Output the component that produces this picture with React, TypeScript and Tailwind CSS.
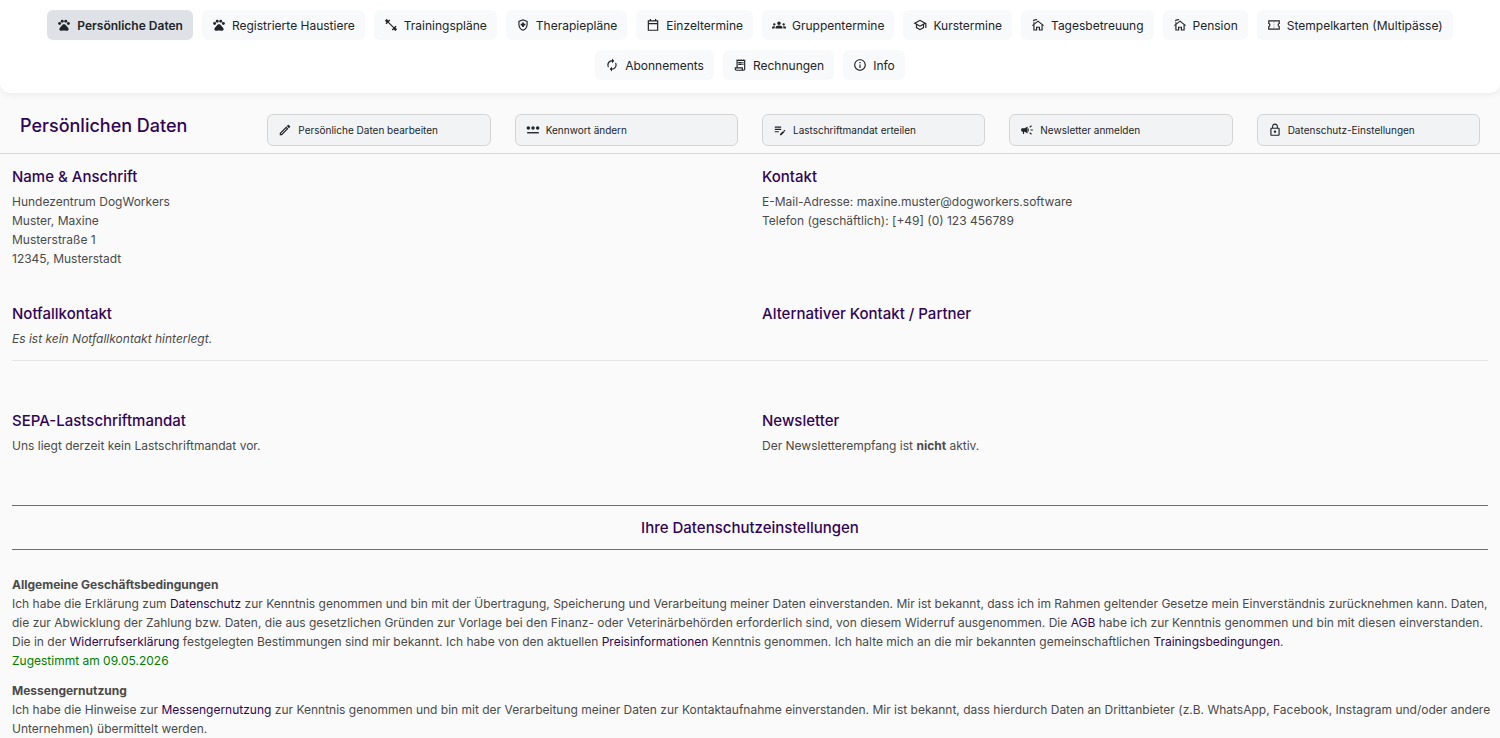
import React from "react";
import type { IconType } from "react-icons";
import {
  MdAutorenew,
  MdCampaign,
  MdEditNote,
  MdGroups,
  MdInfoOutline,
  MdLockOutline,
  MdOutlineEdit,
  MdOutlineHealthAndSafety,
  MdOutlineReceiptLong,
  MdOutlineSchool,
  MdPets,
} from "react-icons/md";

type IconComponent = IconType | React.FC<{ className?: string }>;

interface Entry {
  label: string;
  icon: IconComponent;
}

const ExerciseIcon: React.FC<{ className?: string }> = ({ className }) => (
  <svg viewBox="0 0 24 24" fill="none" stroke="currentColor" className={className}>
    <path d="M7 7 17 17" strokeWidth="2" />
    <path d="M3.4 9.8 9.8 3.4M14.2 20.6 20.6 14.2" strokeWidth="2.4" />
    <path d="M2.4 5.2 5.2 2.4M18.8 21.6 21.6 18.8" strokeWidth="2" />
    <path d="M4 4 7 7M17 17 20 20" strokeWidth="4" />
  </svg>
);

const CalendarIcon: React.FC<{ className?: string }> = ({ className }) => (
  <svg viewBox="0 0 24 24" fill="none" stroke="currentColor" strokeWidth="2" className={className}>
    <path d="M4 5h16v16H4zM4 9.5h16M7.5 1.8V5M16.5 1.8V5" />
  </svg>
);

const CottageIcon: React.FC<{ className?: string }> = ({ className }) => (
  <svg viewBox="0 0 24 24" fill="none" stroke="currentColor" strokeWidth="2" className={className}>
    <path d="M2.4 13 12 5.4 21.6 13" />
    <path d="M5 11.5V20.5h4.6v-4.6h4.8v4.6H19V11.5" />
    <path d="M5 10V7.4M4.2 5.6c0-1.8 1.2-2.4 2.8-2.4S9.6 2.8 9.6 1.6" />
  </svg>
);

const TicketIcon: React.FC<{ className?: string }> = ({ className }) => (
  <svg viewBox="0 0 24 24" fill="none" stroke="currentColor" className={className}>
    <path
      d="M3 5h18v4.2a3 3 0 0 0 0 5.6v4.2h-18v-4.2a3 3 0 0 0 0-5.6z"
      strokeWidth="2"
    />
    <path d="M12 6.5v11" strokeWidth="1.4" strokeDasharray="2.4 1.8" strokeOpacity="0.5" />
  </svg>
);

const PasswordIcon: React.FC<{ className?: string }> = ({ className }) => (
  <svg viewBox="0 0 24 24" fill="currentColor" className={className}>
    <circle cx="4" cy="8.5" r="3" />
    <circle cx="12" cy="8.5" r="3" />
    <circle cx="20" cy="8.5" r="3" />
    <path d="M2 15.5h20v2.4H2z" />
  </svg>
);

const tabs: Entry[] = [
  { label: "Persönliche Daten", icon: MdPets },
  { label: "Registrierte Haustiere", icon: MdPets },
  { label: "Trainingspläne", icon: ExerciseIcon },
  { label: "Therapiepläne", icon: MdOutlineHealthAndSafety },
  { label: "Einzeltermine", icon: CalendarIcon },
  { label: "Gruppentermine", icon: MdGroups },
  { label: "Kurstermine", icon: MdOutlineSchool },
  { label: "Tagesbetreuung", icon: CottageIcon },
  { label: "Pension", icon: CottageIcon },
  { label: "Stempelkarten (Multipässe)", icon: TicketIcon },
  { label: "Abonnements", icon: MdAutorenew },
  { label: "Rechnungen", icon: MdOutlineReceiptLong },
  { label: "Info", icon: MdInfoOutline },
];

const actions: Entry[] = [
  { label: "Persönliche Daten bearbeiten", icon: MdOutlineEdit },
  { label: "Kennwort ändern", icon: PasswordIcon },
  { label: "Lastschriftmandat erteilen", icon: MdEditNote },
  { label: "Newsletter anmelden", icon: MdCampaign },
  { label: "Datenschutz-Einstellungen", icon: MdLockOutline },
];

const Section: React.FC<{ title: string; children?: React.ReactNode }> = ({ title, children }) => (
  <section>
    <h2 className="mb-[5px] text-[15px] leading-5 font-medium text-[#310458]">{title}</h2>
    {children}
  </section>
);

const TextLink: React.FC<{ children: React.ReactNode }> = ({ children }) => (
  <a href="#" className="text-[#310458]">
    {children}
  </a>
);

export default function App() {
  return (
    <div className="min-h-screen bg-[#fafafa] font-['Inter',sans-serif] text-xs leading-[19px] text-[#4a4a4a]">
      <nav className="flex flex-wrap justify-center gap-x-[9px] gap-y-[10px] rounded-b-[10px] bg-white px-8 pt-[10px] pb-[13px] shadow-[0_2px_6px_rgba(0,0,0,0.06)]">
        {tabs.map(({ label, icon: Icon }, i) => (
          <a
            key={label}
            href="#"
            aria-current={i === 0 ? "page" : undefined}
            className={`flex h-[30px] items-center gap-[6px] rounded-md px-[10px] text-[#212529] ${
              i === 0 ? "bg-[#dee2e6] font-semibold" : "bg-[#f8f9fa]"
            }`}
          >
            <Icon className="size-[14px]" />
            {label}
          </a>
        ))}
      </nav>

      <header className="grid grid-cols-6 items-start gap-6 border-b border-[#d9d9d9] px-5 pt-[21px] pb-[7px]">
        <h1 className="text-lg leading-6 font-medium whitespace-nowrap text-[#310458]">Persönlichen Daten</h1>
        {actions.map(({ label, icon: Icon }) => (
          <button
            key={label}
            type="button"
            className="flex h-8 items-center gap-[6px] rounded-md border border-[#d3d4d6] bg-[#f1f3f5] px-[10px] text-[10px] text-[#212529]"
          >
            <Icon className="size-[14px]" />
            {label}
          </button>
        ))}
      </header>

      <main className="px-3">
        <div className="grid grid-cols-2 gap-x-6 gap-y-9 border-b border-[#e6e6e6] pt-[13px] pb-3">
          <Section title="Name & Anschrift">
            <p>Hundezentrum DogWorkers</p>
            <p>Muster, Maxine</p>
            <p>Musterstraße 1</p>
            <p>12345, Musterstadt</p>
          </Section>
          <Section title="Kontakt">
            <p>E-Mail-Adresse: maxine.muster@dogworkers.software</p>
            <p>Telefon (geschäftlich): [+49] (0) 123 456789</p>
          </Section>
          <Section title="Notfallkontakt">
            <p className="italic">Es ist kein Notfallkontakt hinterlegt.</p>
          </Section>
          <Section title="Alternativer Kontakt / Partner" />
        </div>

        <div className="grid grid-cols-2 gap-x-6 py-[50px]">
          <Section title="SEPA-Lastschriftmandat">
            <p>Uns liegt derzeit kein Lastschriftmandat vor.</p>
          </Section>
          <Section title="Newsletter">
            <p>
              Der Newsletterempfang ist <strong>nicht</strong> aktiv.
            </p>
          </Section>
        </div>

        <h2 className="border-y border-[#7a6192] pt-3 pb-[11px] text-center text-[15px] leading-5 font-medium text-[#310458]">
          Ihre Datenschutzeinstellungen
        </h2>

        <div className="-mr-2 pt-[25px]">
          <section>
            <h3 className="font-bold">Allgemeine Geschäftsbedingungen</h3>
            <p>
              Ich habe die Erklärung zum <TextLink>Datenschutz</TextLink> zur Kenntnis genommen und bin mit der
              Übertragung, Speicherung und Verarbeitung meiner Daten einverstanden. Mir ist bekannt, dass ich im Rahmen
              geltender Gesetze mein Einverständnis zurücknehmen kann. Daten, die zur Abwicklung der Zahlung bzw.
              Daten, die aus gesetzlichen Gründen zur Vorlage bei den Finanz- oder Veterinärbehörden erforderlich sind,
              von diesem Widerruf ausgenommen. Die <TextLink>AGB</TextLink> habe ich zur Kenntnis genommen und bin mit
              diesen einverstanden. Die in der <TextLink>Widerrufserklärung</TextLink> festgelegten Bestimmungen sind
              mir bekannt. Ich habe von den aktuellen <TextLink>Preisinformationen</TextLink> Kenntnis genommen. Ich
              halte mich an die mir bekannten gemeinschaftlichen <TextLink>Trainingsbedingungen</TextLink>.
            </p>
            <p className="text-[#008000]">Zugestimmt am 09.05.2026</p>
          </section>

          <section className="mt-[11px]">
            <h3 className="font-bold">Messengernutzung</h3>
            <p>
              Ich habe die Hinweise zur <TextLink>Messengernutzung</TextLink> zur Kenntnis genommen und bin mit der
              Verarbeitung meiner Daten zur Kontaktaufnahme einverstanden. Mir ist bekannt, dass hierdurch Daten an
              Drittanbieter (z.B. WhatsApp, Facebook, Instagram und/oder andere Unternehmen) übermittelt werden.
            </p>
          </section>
        </div>
      </main>
    </div>
  );
}
